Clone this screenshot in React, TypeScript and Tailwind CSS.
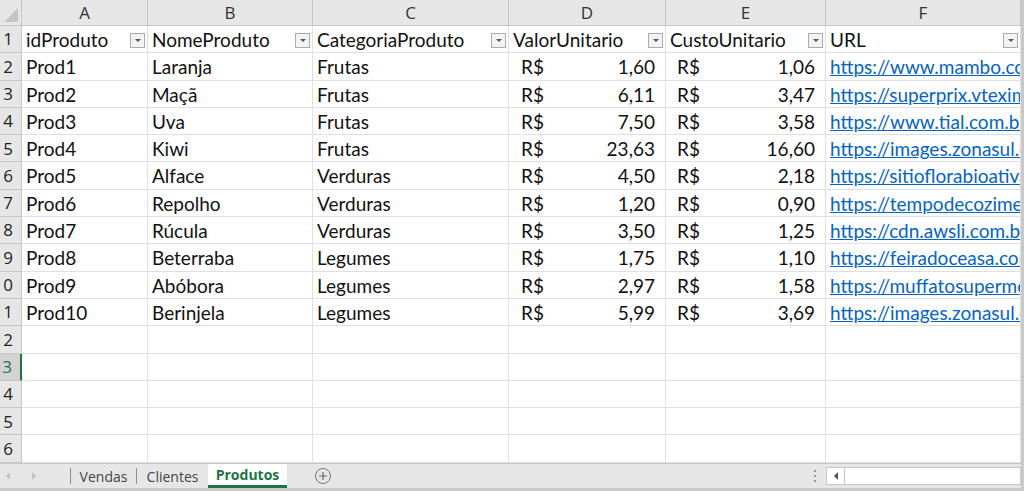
import React from 'react';

const cols = ['A', 'B', 'C', 'D', 'E', 'F'];

const rows = [
  ['Prod1', 'Laranja', 'Frutas', '1,60', '1,06', 'https://www.mambo.com.br/laranja-pera'],
  ['Prod2', 'Maçã', 'Frutas', '6,11', '3,47', 'https://superprix.vteximg.com.br/maca'],
  ['Prod3', 'Uva', 'Frutas', '7,50', '3,58', 'https://www.tial.com.br/uva'],
  ['Prod4', 'Kiwi', 'Frutas', '23,63', '16,60', 'https://images.zonasul.com.br/kiwi'],
  ['Prod5', 'Alface', 'Verduras', '4,50', '2,18', 'https://sitioflorabioativa.com.br/alface'],
  ['Prod6', 'Repolho', 'Verduras', '1,20', '0,90', 'https://tempodecozimento.com.br/repolho'],
  ['Prod7', 'Rúcula', 'Verduras', '3,50', '1,25', 'https://cdn.awsli.com.br/rucula'],
  ['Prod8', 'Beterraba', 'Legumes', '1,75', '1,10', 'https://feiradoceasa.com.br/beterraba'],
  ['Prod9', 'Abóbora', 'Legumes', '2,97', '1,58', 'https://muffatosupermercados.com.br/abobora'],
  ['Prod10', 'Berinjela', 'Legumes', '5,99', '3,69', 'https://images.zonasul.com.br/berinjela'],
];

const headers = ['idProduto', 'NomeProduto', 'CategoriaProduto', 'ValorUnitario', 'CustoUnitario', 'URL'];

function FilterBtn() {
  return (
    <span className="w-[15px] h-[15px] shrink-0 border border-[#ababab] bg-[#f3f3f3] flex items-center justify-center">
      <span className="w-0 h-0 border-l-[3px] border-r-[3px] border-t-[3px] border-l-transparent border-r-transparent border-t-[#555]"></span>
    </span>
  );
}

function RowHead({ n, active }: { n: number; active?: boolean }) {
  return (
    <div
      className={
        'flex items-center justify-end overflow-hidden whitespace-nowrap pr-[8px] border-b font-["Open_Sans"] text-[17px] ' +
        (active
          ? 'bg-[#d2d2d2] text-[#217346] border-r-2 border-r-[#217346] border-b-[#c6c6c6]'
          : 'bg-[#e6e6e6] text-[#222] border-r border-r-[#c6c6c6] border-b-[#c6c6c6]')
      }
    >
      {n}
    </div>
  );
}

const cell = 'border-r border-b border-[#e0e0e0] flex items-center overflow-hidden whitespace-nowrap pt-[2px]';

export default function App() {
  return (
    <div className="w-[1024px] h-[491px] overflow-hidden bg-white font-['Lato'] text-[19px] text-[#111]">
      <div className="flex flex-col h-full border-r-[3px] border-b-[3px] border-[#c9c9c9]">
        <div className="grid grid-cols-[22px_126px_165px_196px_157px_160px_195px] grid-rows-[26px_repeat(16,27.3px)] h-[463px] overflow-hidden">
          {/* corner */}
          <div className="bg-[#e6e6e6] border-r border-b border-[#c6c6c6] flex items-end justify-end p-[3px]">
            <svg width="14" height="14" viewBox="0 0 14 14">
              <polygon points="14,0 14,14 0,14" fill="#c4c4c4" />
            </svg>
          </div>
          {cols.map((c) => (
            <div
              key={c}
              className="bg-[#e6e6e6] border-r border-b border-[#c6c6c6] flex items-center justify-center font-['Open_Sans'] text-[17px] text-[#333]"
            >
              {c}
            </div>
          ))}

          {/* header row 1 */}
          <RowHead n={1} />
          {headers.map((h) => (
            <div key={h} className={cell + ' justify-between pl-[4px] pr-[2px]'}>
              <span>{h}</span>
              <FilterBtn />
            </div>
          ))}

          {rows.map((r, i) => (
            <React.Fragment key={r[0]}>
              <RowHead n={i + 2} />
              <div className={cell + ' pl-[4px]'}>{r[0]}</div>
              <div className={cell + ' pl-[4px]'}>{r[1]}</div>
              <div className={cell + ' pl-[4px]'}>{r[2]}</div>
              <div className={cell + ' justify-between pl-[12px] pr-[10px]'}>
                <span>R$</span>
                <span>{r[3]}</span>
              </div>
              <div className={cell + ' justify-between pl-[11px] pr-[10px]'}>
                <span>R$</span>
                <span>{r[4]}</span>
              </div>
              <div className={cell + ' pl-[4px] text-[#0563c1] underline'}>{r[5]}</div>
            </React.Fragment>
          ))}

          {[12, 13, 14, 15, 16].map((n) => (
            <React.Fragment key={n}>
              <RowHead n={n} active={n === 13} />
              {cols.map((c) => (
                <div key={c} className={cell}></div>
              ))}
            </React.Fragment>
          ))}
        </div>

        {/* sheet tabs */}
        <div className="h-[25px] flex items-stretch bg-[#e6e6e6] border-t border-[#c8c8c8] font-['Open_Sans'] text-[14px] text-[#444]">
          <div className="w-[70px] flex items-center">
            <span className="ml-[6px] w-0 h-0 border-t-[4px] border-b-[4px] border-r-[4px] border-t-transparent border-b-transparent border-r-[#c2c2c2]"></span>
            <span className="ml-[22px] w-0 h-0 border-t-[4px] border-b-[4px] border-l-[4px] border-t-transparent border-b-transparent border-l-[#c2c2c2]"></span>
          </div>
          <div className="w-px bg-[#8f8f8f] my-[4px]"></div>
          <div className="w-[65px] flex items-center justify-center">Vendas</div>
          <div className="w-px bg-[#8f8f8f] my-[4px]"></div>
          <div className="w-[71px] flex items-center justify-center">Clientes</div>
          <div className="w-[79px] bg-white flex items-center justify-center font-bold text-[#217346] border-b-[3px] border-[#217346]">
            Produtos
          </div>
          <div className="flex-1 flex items-center">
            <span className="ml-[28px] w-[16px] h-[16px] rounded-full border border-[#777] flex items-center justify-center text-[#666]">
              <svg width="10" height="10" viewBox="0 0 10 10">
                <path d="M5 1v8M1 5h8" stroke="#666" strokeWidth="1.2" />
              </svg>
            </span>
            <span className="ml-auto mr-[10px] flex flex-col gap-[3px]">
              <span className="w-[2px] h-[2px] bg-[#999]"></span>
              <span className="w-[2px] h-[2px] bg-[#999]"></span>
              <span className="w-[2px] h-[2px] bg-[#999]"></span>
            </span>
          </div>
          <div className="w-[195px] flex items-stretch py-[3px] pr-0">
            <div className="flex-1 flex bg-white border border-[#c6c6c6]">
              <div className="w-[18px] border-r border-[#c6c6c6] flex items-center justify-center">
                <span className="w-0 h-0 border-t-[4px] border-b-[4px] border-r-[4px] border-t-transparent border-b-transparent border-r-[#555]"></span>
              </div>
            </div>
          </div>
        </div>
      </div>
    </div>
  );
}
